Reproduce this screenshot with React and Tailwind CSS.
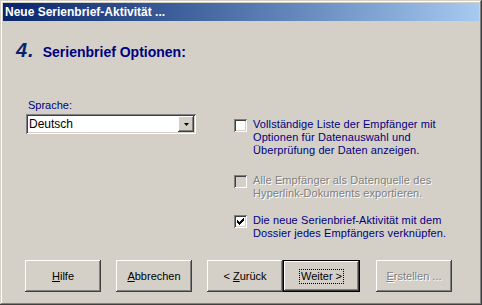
import React from "react";

const FONT = "font-['Liberation_Sans',Arial,sans-serif]";

// raised 3D border for classic buttons
const RAISED =
  "shadow-[inset_-1px_-1px_#404040,inset_1px_1px_#ffffff,inset_-2px_-2px_#808080,inset_2px_2px_#d4d0c8]";
const SUNKEN =
  "shadow-[inset_1px_1px_#808080,inset_-1px_-1px_#ffffff,inset_2px_2px_#404040,inset_-2px_-2px_#d4d0c8]";

function Checkbox({ checked, disabled }) {
  return (
    <div
      className={`w-[13px] h-[13px] shrink-0 flex items-center justify-center ${SUNKEN} ${
        disabled ? "bg-[#d4d0c8]" : "bg-white"
      }`}
    >
      {checked && (
        <svg width="7" height="7" viewBox="0 0 7 7" className="block">
          <path d="M0 2h1v1h1v1h1V3h1V2h1V1h1V0h1v3H6v1H5v1H4v1H3v1H2V6H1V5H0z" fill="#000" />
        </svg>
      )}
    </div>
  );
}

function Option({ checked, disabled, lines, className = "" }) {
  return (
    <div className={`flex ${className}`}>
      <div className="pt-[1px]">
        <Checkbox checked={checked} disabled={disabled} />
      </div>
      <div
        className={`ml-[6px] text-[11px] leading-[13px] tracking-[0.1px] ${
          disabled
            ? "text-[#808080] [text-shadow:1px_1px_0_#ffffff]"
            : "text-[#000080]"
        }`}
      >
        {lines.map((l, i) => (
          <div key={i}>{l}</div>
        ))}
      </div>
    </div>
  );
}

function Btn({ children, isDefault, disabled, className = "" }) {
  if (isDefault) {
    return (
      <div className={`w-[77px] h-[32px] border border-black ${className}`}>
        <div className={`w-full h-full flex items-center justify-center ${RAISED}`}>
          <span className="px-[1px] outline outline-1 outline-dotted outline-black leading-[13px] text-[11px] text-black">
            {children}
          </span>
        </div>
      </div>
    );
  }
  return (
    <div
      className={`w-[76px] h-[32px] flex items-center justify-center text-[11px] ${RAISED} ${
        disabled ? "text-[#808080] [text-shadow:1px_1px_0_#ffffff]" : "text-black"
      } ${className}`}
    >
      {children}
    </div>
  );
}

export default function App() {
  return (
    <div
      className={`${FONT} w-[482px] h-[305px] bg-[#d4d0c8] p-[3px] flex flex-col shadow-[inset_-1px_-1px_#404040,inset_1px_1px_#d4d0c8,inset_-2px_-2px_#808080,inset_2px_2px_#ffffff]`}
    >
      {/* title bar */}
      <div className="h-[18px] bg-linear-to-r from-[#0a246a] to-[#a6caf0] flex items-center pl-[2px]">
        <span className="text-white font-bold text-[12px] leading-none">
          Neue Serienbrief-Aktivität ...
        </span>
      </div>

      <div className="flex-1 flex flex-col">
        {/* heading */}
        <div className="flex items-baseline mt-[18px] ml-[13px] text-[#0a246a]">
          <span className="font-bold italic text-[20px] leading-[22px] tracking-[1px]">4.</span>
          <span className="ml-[8px] font-bold text-[14px] text-[#000080]">
            Serienbrief Optionen:
          </span>
        </div>

        <div className="flex mt-[36px]">
          {/* left column */}
          <div className="ml-[23px] w-[170px]">
            <div className="ml-[2px] text-[11px] leading-[13px] text-[#000080]">Sprache:</div>
            <div className={`mt-[2px] h-[20px] bg-white flex items-center pl-[3px] pr-[2px] ${SUNKEN}`}>
              <span className="flex-1 text-[12px] text-black">Deutsch</span>
              <div className={`w-[16px] h-[16px] bg-[#d4d0c8] flex items-center justify-center ${RAISED}`}>
                <svg width="5" height="3" viewBox="0 0 5 3">
                  <path d="M0 0h5L2.5 3z" fill="#000" />
                </svg>
              </div>
            </div>
          </div>

          {/* right column */}
          <div className="ml-[38px] mt-[19px] flex flex-col">
            <Option
              lines={[
                "Vollständige Liste der Empfänger mit",
                "Optionen für Datenauswahl und",
                "Überprüfung der Daten anzeigen.",
              ]}
            />
            <Option
              disabled
              className="mt-[17px]"
              lines={["Alle Empfänger als Datenquelle des", "Hyperlink-Dokuments exportieren."]}
            />
            <Option
              checked
              className="mt-[14px]"
              lines={["Die neue Serienbrief-Aktivität mit dem", "Dossier jedes Empfängers verknüpfen."]}
            />
          </div>
        </div>

        {/* buttons */}
        <div className="mt-auto mb-[10px] ml-[22px] flex">
          <Btn>
            <span><u>H</u>ilfe</span>
          </Btn>
          <Btn className="ml-[15px]">
            <span><u>A</u>bbrechen</span>
          </Btn>
          <Btn className="ml-[15px]">
            <span>&lt; <u>Z</u>urück</span>
          </Btn>
          <Btn isDefault>Weiter &gt;</Btn>
          <Btn disabled className="ml-[16px]">
            <span><u>E</u>rstellen ...</span>
          </Btn>
        </div>
      </div>
    </div>
  );
}
